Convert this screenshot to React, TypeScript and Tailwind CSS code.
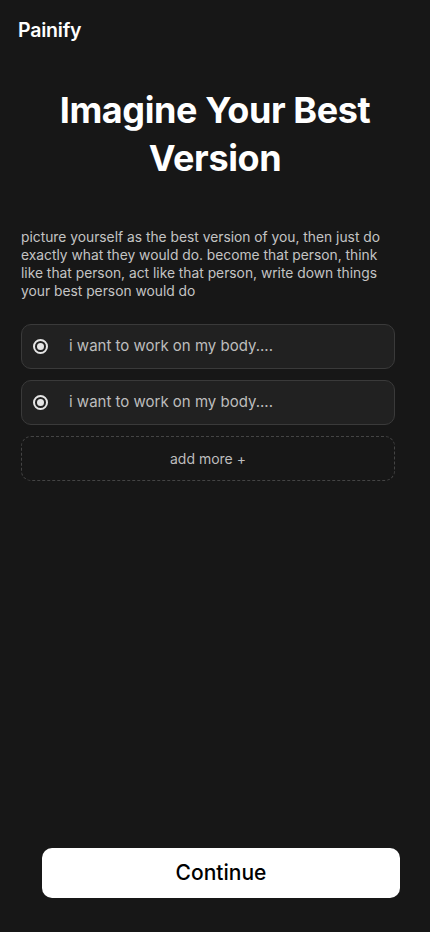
import React from "react";

function Radio() {
  return (
    <span className="flex h-[15px] w-[15px] items-center justify-center rounded-full border-[2px] border-[#e5e5e5]">
      <span className="h-[7px] w-[7px] rounded-full bg-[#e5e5e5]" />
    </span>
  );
}

export default function App() {
  return (
    <div
      className="flex min-h-[932px] w-[430px] flex-col bg-[#171717] text-white"
      style={{ fontFamily: "Inter, 'Noto Sans', sans-serif" }}
    >
      <div className="px-[18px] pt-[18px] text-[19.5px] font-semibold leading-[24px] tracking-[-0.2px]">Painify</div>
      <h1 className="mt-[44px] px-[20px] text-center text-[36px] font-bold leading-[48px] tracking-[-0.4px]">
        Imagine Your Best Version
      </h1>
      <div className="mt-[46px] flex w-[395px] flex-col pl-[21px]">
        <p className="text-[13.8px] leading-[18px] text-[#c4c4c4]">
          picture yourself as the best version of you, then just do exactly what they would do. become that person, think like that person, act like that person, write down things your best person would do
        </p>
        <div className="mt-[24px] flex flex-col gap-[11px]">
          {[0, 1].map((i) => (
            <div
              key={i}
              className="flex h-[45px] items-center rounded-[10px] border border-[#3a3a3a] bg-[#212121] pl-[11px]"
            >
              <Radio />
              <span className="ml-[21px] text-[15px] text-[#bdbdbd]">i want to work on my body....</span>
            </div>
          ))}
          <div className="flex h-[45px] items-center justify-center rounded-[10px] border border-dashed border-[#444444] text-[14px] text-[#bdbdbd]">
            add more +
          </div>
        </div>
      </div>
      <div className="flex-1" />
      <div className="pb-[34px] pl-[42px]">
        <button className="flex h-[50px] w-[358px] items-center justify-center rounded-[10px] bg-white text-[21px] font-medium text-black">
          Continue
        </button>
      </div>
    </div>
  );
}
